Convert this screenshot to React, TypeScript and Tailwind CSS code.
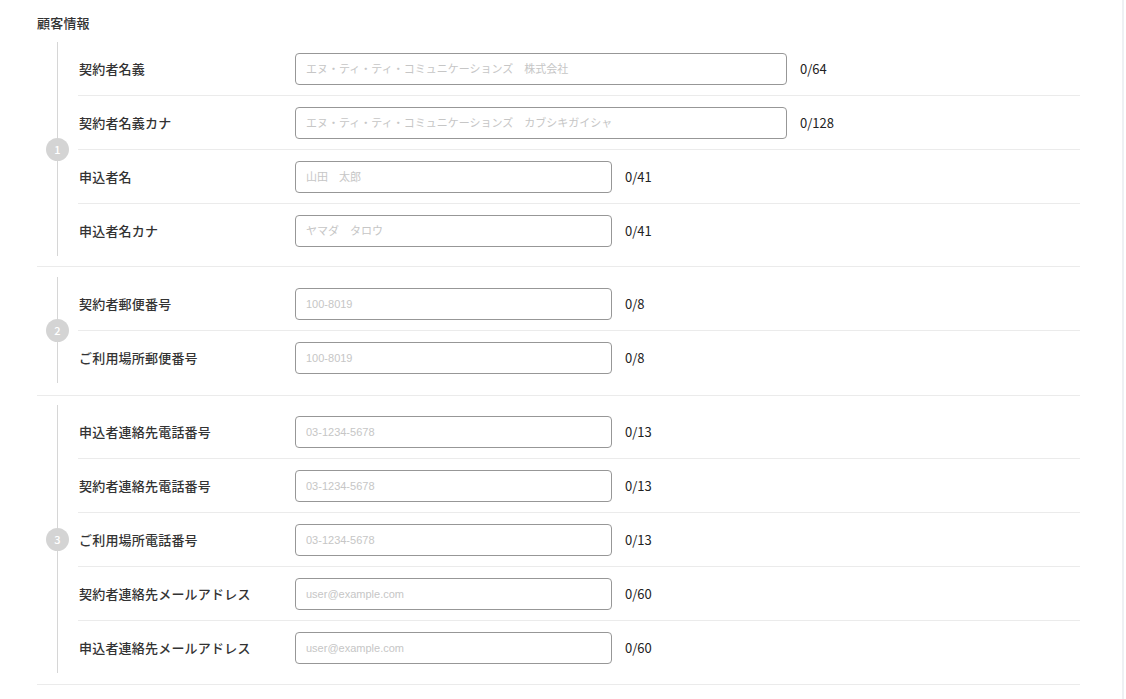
import React from 'react';

type Field = {
  label: string;
  placeholder: string;
  max: number;
  wide?: boolean;
};

const sections: Field[][] = [
  [
    { label: '契約者名義', placeholder: 'エヌ・ティ・ティ・コミュニケーションズ　株式会社', max: 64, wide: true },
    { label: '契約者名義カナ', placeholder: 'エヌ・ティ・ティ・コミュニケーションズ　カブシキガイシャ', max: 128, wide: true },
    { label: '申込者名', placeholder: '山田　太郎', max: 41 },
    { label: '申込者名カナ', placeholder: 'ヤマダ　タロウ', max: 41 },
  ],
  [
    { label: '契約者郵便番号', placeholder: '100-8019', max: 8 },
    { label: 'ご利用場所郵便番号', placeholder: '100-8019', max: 8 },
  ],
  [
    { label: '申込者連絡先電話番号', placeholder: '03-1234-5678', max: 13 },
    { label: '契約者連絡先電話番号', placeholder: '03-1234-5678', max: 13 },
    { label: 'ご利用場所電話番号', placeholder: '03-1234-5678', max: 13 },
    { label: '契約者連絡先メールアドレス', placeholder: 'user@example.com', max: 60 },
    { label: '申込者連絡先メールアドレス', placeholder: 'user@example.com', max: 60 },
  ],
];

// per-section spacing around the rows
const sectionPad = ['pb-[8px]', 'pt-[10px] pb-[10px]', 'pt-[9px] pb-[9px]'];

function FieldRow({ field, last }: { field: Field; last: boolean }) {
  return (
    <div className={`flex h-[54px] items-center ${last ? '' : 'border-b border-[#ebebeb]'}`}>
      <div className="w-[217px] shrink-0 pl-px text-[13px] font-medium tracking-[0.2px] text-[#333]">{field.label}</div>
      <input
        className={`h-[32px] rounded-[4px] border border-[#979797] px-[10px] text-[11px] text-[#333] outline-none placeholder:text-[#c6c6c6] ${field.wide ? 'w-[492px]' : 'w-[317px]'}`}
        style={{ fontFamily: '"Liberation Sans", "Noto Sans CJK JP", sans-serif' }}
        placeholder={field.placeholder}
      />
      <span className="ml-[13px] text-[13px] text-[#222]">0/{field.max}</span>
    </div>
  );
}

export default function App() {
  return (
    <div
      className="min-h-screen w-[1126px] bg-white"
      style={{ fontFamily: '"Noto Sans CJK JP", "Noto Sans", sans-serif' }}
    >
      <div className="min-h-screen w-[1124px] border-r-2 border-[#eef0f3] pl-[37px] pr-[42px]">
        <div className="flex h-[42px] items-start pt-[13px] text-[13px] font-medium tracking-[0.2px] text-[#333]">顧客情報</div>
        {sections.map((fields, i) => (
          <section key={i} className={`flex border-b border-[#ebebeb] ${sectionPad[i]}`}>
            <div className="flex w-[41px] shrink-0 flex-col items-center">
              <div className="w-px flex-1 bg-[#d6d6d6]" />
              <div className="flex h-[23px] w-[23px] items-center justify-center rounded-full bg-[#d4d4d4] text-[11px] font-medium text-white">
                {i + 1}
              </div>
              <div className="mb-[2px] w-px flex-1 bg-[#d6d6d6]" />
            </div>
            <div className="flex-1">
              {fields.map((f, j) => (
                <FieldRow key={f.label} field={f} last={j === fields.length - 1} />
              ))}
            </div>
          </section>
        ))}
      </div>
    </div>
  );
}
